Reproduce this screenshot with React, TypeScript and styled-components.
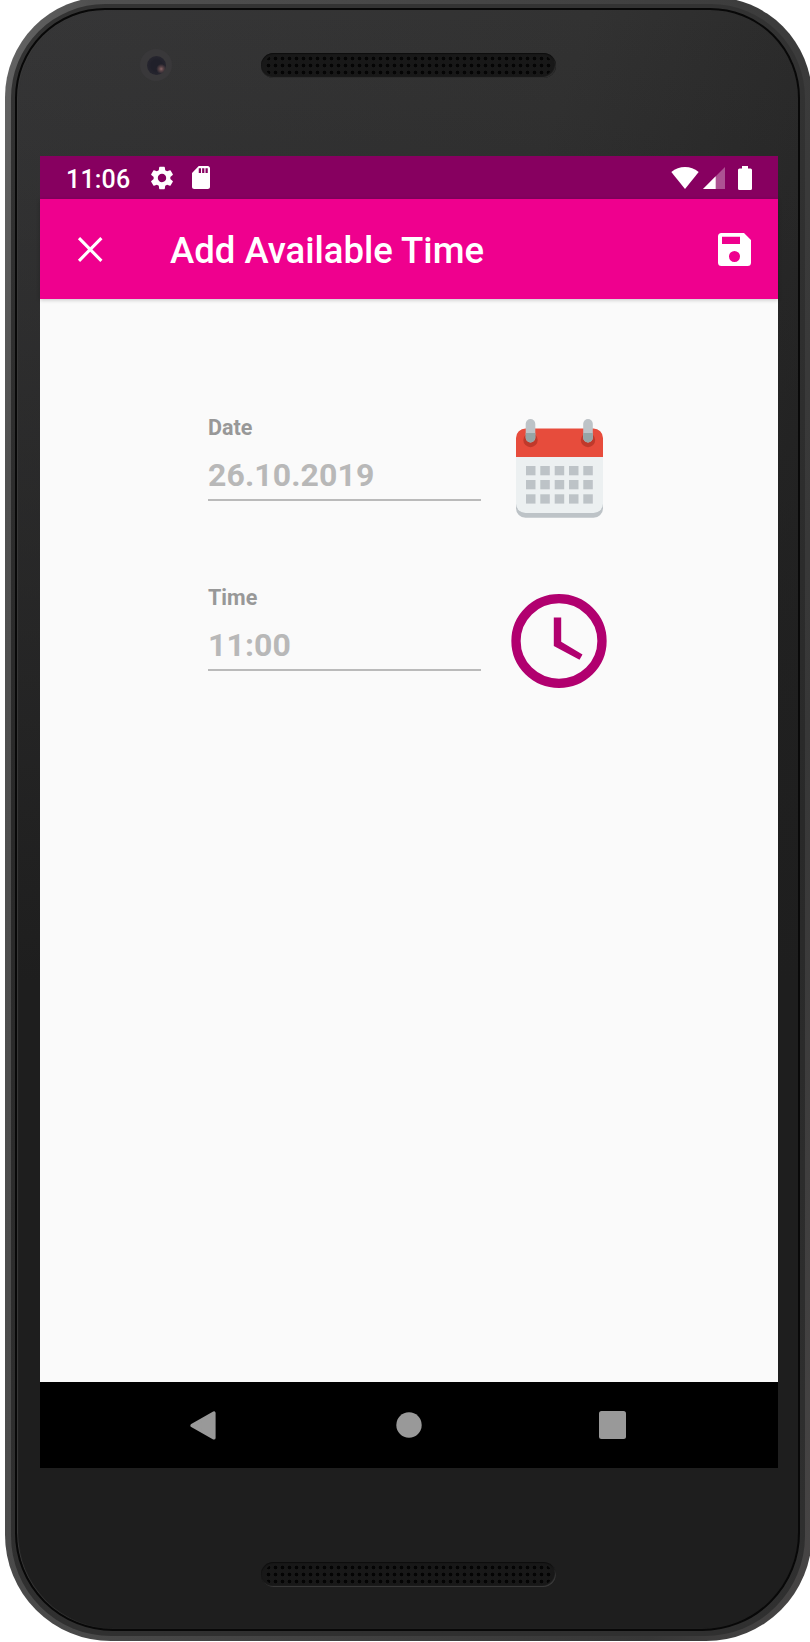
import React from "react";
import styled, { createGlobalStyle } from "styled-components";

const GlobalStyle = createGlobalStyle`
  * { box-sizing: border-box; }
  html, body { margin: 0; padding: 0; background: #ffffff; }
  body { font-family: Roboto, "Liberation Sans", sans-serif; }
  svg { display: block; }
`;

const Page = styled.main`
  display: flex;
  width: 810px;
  height: 1642px;
  padding-left: 5px;
  overflow: hidden;
  background: #ffffff;
`;

const Rim = styled.div`
  flex: none;
  width: 807px;
  height: 1644px;
  margin-top: -3px;
  padding: 7px 7px 5px 6px;
  border-radius: 100px 100px 106px 106px;
  background: linear-gradient(100deg, #676767 0%, #505050 8%, #434343 50%, #373737 85%, #484646 100%);
`;

const Bevel = styled.div`
  height: 100%;
  padding: 4px 5px 5px 4px;
  border-radius: 94px 94px 100px 100px;
  background: linear-gradient(180deg, #333333, #292929 50%, #303030);
`;

const Face = styled.div`
  display: flex;
  flex-direction: column;
  height: 100%;
  padding: 0 20px 0 23px;
  border: 2px solid #080808;
  border-radius: 90px 90px 98px 98px;
  background:
    linear-gradient(180deg, rgba(30, 30, 30, 0) 0%, #1e1e1e 60%),
    linear-gradient(110deg, #363637 0%, #323232 42%, #242424 75%, #212121 100%);
  box-shadow: inset 1px 0 1px #3a3a3a;
`;

const TopBezel = styled.div`
  display: flex;
  flex: none;
  height: 146px;
  padding: 39px 0 0 100px;
`;

const Camera = styled.div`
  display: flex;
  align-items: center;
  justify-content: center;
  width: 32px;
  height: 32px;
  border-radius: 50%;
  background: #39383a;
`;

const Lens = styled.div`
  width: 19px;
  height: 19px;
  border-radius: 50%;
  background:
    radial-gradient(circle at 75% 68%, #8c6668 0, #5b4548 10%, rgba(60, 50, 55, 0) 26%),
    radial-gradient(circle, #20202a 40%, #2c2a33 100%);
`;

const Speaker = styled.div<{ $dot: string; $edge: string }>`
  width: 295px;
  height: 25px;
  padding: 2px 4px;
  border-radius: 13px;
  background: #181818;
  box-shadow: inset 0 1px 1px #0d0d0d, inset -1px -1px 1px ${(p) => p.$edge};

  &::before {
    content: "";
    display: block;
    height: 21px;
    border-radius: 10px;
    background: radial-gradient(circle at center, ${(p) => p.$dot} 1.4px, transparent 2.2px) 0 0 / 7px 7px;
  }
`;

const TopSpeaker = styled(Speaker)`
  margin: 4px 0 0 89px;
`;

const BottomBezel = styled.div`
  display: flex;
  flex: 1;
  padding: 94px 0 0 221px;
`;

const Screen = styled.section`
  display: flex;
  flex: none;
  flex-direction: column;
  width: 738px;
  height: 1312px;
  background: #fafafa;
`;

const StatusBar = styled.div`
  display: flex;
  flex: none;
  align-items: center;
  height: 43px;
  padding: 0 26px 0 26px;
  background: #870060;
`;

const Clock = styled.time`
  width: 82px;
  color: #ffffff;
  font-size: 25px;
  font-weight: 500;
  line-height: 43px;
  letter-spacing: 0.2px;
  padding-top: 3px;
`;

const StatusGroup = styled.div<{ $gap: number; $end?: boolean }>`
  display: flex;
  align-items: center;
  gap: ${(p) => p.$gap}px;
  margin-left: ${(p) => (p.$end ? "auto" : "0")};
`;

const BatterySlot = styled.div`
  margin-left: 9px;
`;

const AppBar = styled.header`
  display: flex;
  flex: none;
  align-items: center;
  height: 100px;
  padding: 0 27px 0 36px;
  background: #ef008e;
  box-shadow: 0 1px 4px rgba(0, 0, 0, 0.22);
`;

const IconButton = styled.button`
  display: block;
  padding: 0;
  border: 0;
  background: none;
  cursor: pointer;
`;

const Title = styled.h1`
  flex: 1;
  margin: 0 0 0 66px;
  color: #ffffff;
  font-size: 36.5px;
  font-weight: 500;
  line-height: 42px;
  padding-top: 3px;
  white-space: nowrap;
`;

const Form = styled.form`
  display: flex;
  flex: 1;
  flex-direction: column;
  padding: 118px 0 0 168px;
`;

const FieldRow = styled.div`
  display: flex;
  height: 170px;
`;

const Field = styled.label`
  display: flex;
  flex-direction: column;
  width: 273px;
  height: 84px;
  border-bottom: 2px solid #bababa;
`;

const FieldLabel = styled.span`
  margin-top: -1px;
  color: #989898;
  font-size: 21.5px;
  font-weight: 700;
  line-height: 24px;
`;

const FieldValue = styled.span`
  margin-top: 17px;
  color: #b8b8b8;
  font-size: 32px;
  font-weight: 700;
  line-height: 36px;
  letter-spacing: 0.1px;
`;

const PickerSlot = styled.div<{ $top: number; $left: number }>`
  margin: ${(p) => p.$top}px 0 0 ${(p) => p.$left}px;
`;

const NavBar = styled.nav`
  display: flex;
  flex: none;
  align-items: center;
  justify-content: space-between;
  height: 86px;
  padding: 0 152px 0 150px;
  background: #000000;
`;

const GearIcon = () => (
  <svg width="28" height="28" viewBox="0 0 24 24" fill="#fff">
    <path d="M19.14 12.94c.04-.3.06-.61.06-.94 0-.32-.02-.64-.07-.94l2.03-1.58a.49.49 0 0 0 .12-.61l-1.92-3.32a.488.488 0 0 0-.59-.22l-2.39.96c-.5-.38-1.03-.7-1.62-.94l-.36-2.54a.484.484 0 0 0-.48-.41h-3.84c-.24 0-.43.17-.47.41l-.36 2.54c-.59.24-1.13.57-1.62.94l-2.39-.96c-.22-.08-.47 0-.59.22L2.74 8.87c-.12.21-.08.47.12.61l2.03 1.58c-.05.3-.09.63-.09.94s.02.64.07.94l-2.03 1.58a.49.49 0 0 0-.12.61l1.92 3.32c.12.22.37.29.59.22l2.39-.96c.5.38 1.03.7 1.62.94l.36 2.54c.05.24.24.41.48.41h3.84c.24 0 .44-.17.47-.41l.36-2.54c.59-.24 1.13-.56 1.62-.94l2.39.96c.22.08.47 0 .59-.22l1.92-3.32c.12-.22.07-.47-.12-.61l-2.01-1.58zM12 15.6A3.61 3.61 0 0 1 8.4 12c0-1.98 1.62-3.6 3.6-3.6s3.6 1.62 3.6 3.6-1.62 3.6-3.6 3.6z" />
  </svg>
);

const SdCardIcon = () => (
  <svg width="18" height="23" viewBox="4 2 16 20" preserveAspectRatio="none" fill="#fff">
    <path d="M18 2h-8L4.02 8 4 20c0 1.1.9 2 2 2h12c1.1 0 2-.9 2-2V4c0-1.1-.9-2-2-2zm-6 6h-2V4h2v4zm3 0h-2V4h2v4zm3 0h-2V4h2v4z" />
  </svg>
);

const WifiIcon = () => (
  <svg width="28" height="22" viewBox="0 0 28 22" fill="#fff">
    <path d="M14 22 0.3 5Q6.500 0 14 0T27.700 5Z" />
  </svg>
);

const SignalIcon = () => (
  <svg width="22" height="22" viewBox="0 0 22 22" fill="#fff">
    <path d="M0 22 22 0V22Z" opacity="0.32" />
    <path d="M0 22 12.700 9.300V22Z" />
  </svg>
);

const BatteryIcon = () => (
  <svg width="14" height="24" viewBox="0 0 14 24" fill="#fff">
    <path d="M4 0h6v2.500h2.500Q14 2.500 14 4V22.500Q14 24 12.500 24h-11Q0 24 0 22.500V4Q0 2.500 1.500 2.500H4Z" />
  </svg>
);

const CloseIcon = () => (
  <svg width="28" height="27" viewBox="0 0 28 27" fill="none" stroke="#fff" strokeWidth="3.100">
    <path d="M3 2.200 25.400 24.800M25.400 2.200 3 24.800" />
  </svg>
);

const SaveIcon = () => (
  <svg width="33" height="33" viewBox="0 0 33 33" fill="#fff" fillRule="evenodd">
    <path d="M3.500 0H26L33 7V29.500Q33 33 29.500 33h-26Q0 33 0 29.500v-26Q0 0 3.500 0ZM4 3.700V11H22V3.700ZM16.500 18a5.500 5.500 0 1 0 0 11a5.500 5.500 0 1 0 0-11Z" />
  </svg>
);

const CalendarIcon = () => (
  <svg width="87" height="99" viewBox="0 0 87 99">
    <rect y="20" width="87" height="78.700" rx="9.500" fill="#bdc3c7" />
    <path d="M0 34H87V84.500a9.500 9.500 0 0 1-9.500 9.500h-68A9.500 9.500 0 0 1 0 84.500Z" fill="#ecf0f1" />
    <path d="M0 38V19A9.500 9.500 0 0 1 9.500 9.500h68A9.500 9.500 0 0 1 87 19V38Z" fill="#e74c3c" />
    {[14.5, 72].map((x) => (
      <g key={x}>
        <circle cx={x} cy="21" r="7.200" fill="#c0392b" />
        <rect x={x - 4.8} y="0" width="9.600" height="23.500" rx="4.800" fill="#bdc3c7" />
        <path d={`M${x - 4.8} 14h9.600v4.700a4.800 4.800 0 0 1-9.600 0Z`} fill="#95a5a6" />
      </g>
    ))}
    {[47, 61, 75.3].map((y) =>
      [10, 24.3, 38.7, 53, 67.3].map((x) => (
        <rect key={`${x}-${y}`} x={x} y={y} width="9.500" height="9.300" fill="#bdc3c7" />
      ))
    )}
  </svg>
);

const TimeIcon = () => (
  <svg width="96" height="94" viewBox="0 0 96 94">
    <ellipse cx="48" cy="47" rx="43" ry="42.300" fill="none" stroke="#b1006f" strokeWidth="9.300" />
    <path d="M42.800 23.500h7.400v24.200L71.500 60.400l-3 5.400L42.800 52Z" fill="#b1006f" />
  </svg>
);

const BackIcon = () => (
  <svg width="26" height="29" viewBox="0 0 26 29">
    <path d="M2 14.500 24 2V27Z" fill="#999" stroke="#999" strokeWidth="3.200" strokeLinejoin="round" />
  </svg>
);

const HomeIcon = () => (
  <svg width="28" height="26" viewBox="-2 0 28 26">
    <circle cx="13" cy="13" r="12.700" fill="#999" />
  </svg>
);

const RecentsIcon = () => (
  <svg width="27" height="28" viewBox="0 0 27 28">
    <rect width="27" height="28" rx="2.500" fill="#999" />
  </svg>
);

export default function App() {
  return (
    <>
      <GlobalStyle />
      <Page>
        <Rim>
          <Bevel>
            <Face>
              <TopBezel>
                <Camera>
                  <Lens />
                </Camera>
                <TopSpeaker $dot="#050505" $edge="#303030" />
              </TopBezel>
              <Screen>
                <StatusBar>
                  <Clock>11:06</Clock>
                  <StatusGroup $gap={16}>
                    <GearIcon />
                    <SdCardIcon />
                  </StatusGroup>
                  <StatusGroup $gap={4} $end>
                    <WifiIcon />
                    <SignalIcon />
                    <BatterySlot>
                      <BatteryIcon />
                    </BatterySlot>
                  </StatusGroup>
                </StatusBar>
                <AppBar>
                  <IconButton type="button" aria-label="Close">
                    <CloseIcon />
                  </IconButton>
                  <Title>Add Available Time</Title>
                  <IconButton type="button" aria-label="Save">
                    <SaveIcon />
                  </IconButton>
                </AppBar>
                <Form>
                  <FieldRow>
                    <Field>
                      <FieldLabel>Date</FieldLabel>
                      <FieldValue>26.10.2019</FieldValue>
                    </Field>
                    <PickerSlot $top={2} $left={35}>
                      <IconButton type="button" aria-label="Choose date">
                        <CalendarIcon />
                      </IconButton>
                    </PickerSlot>
                  </FieldRow>
                  <FieldRow>
                    <Field>
                      <FieldLabel>Time</FieldLabel>
                      <FieldValue>11:00</FieldValue>
                    </Field>
                    <PickerSlot $top={7} $left={30}>
                      <IconButton type="button" aria-label="Choose time">
                        <TimeIcon />
                      </IconButton>
                    </PickerSlot>
                  </FieldRow>
                </Form>
                <NavBar>
                  <BackIcon />
                  <HomeIcon />
                  <RecentsIcon />
                </NavBar>
              </Screen>
              <BottomBezel>
                <Speaker $dot="#040404" $edge="#3c3c3c" />
              </BottomBezel>
            </Face>
          </Bevel>
        </Rim>
      </Page>
    </>
  );
}
